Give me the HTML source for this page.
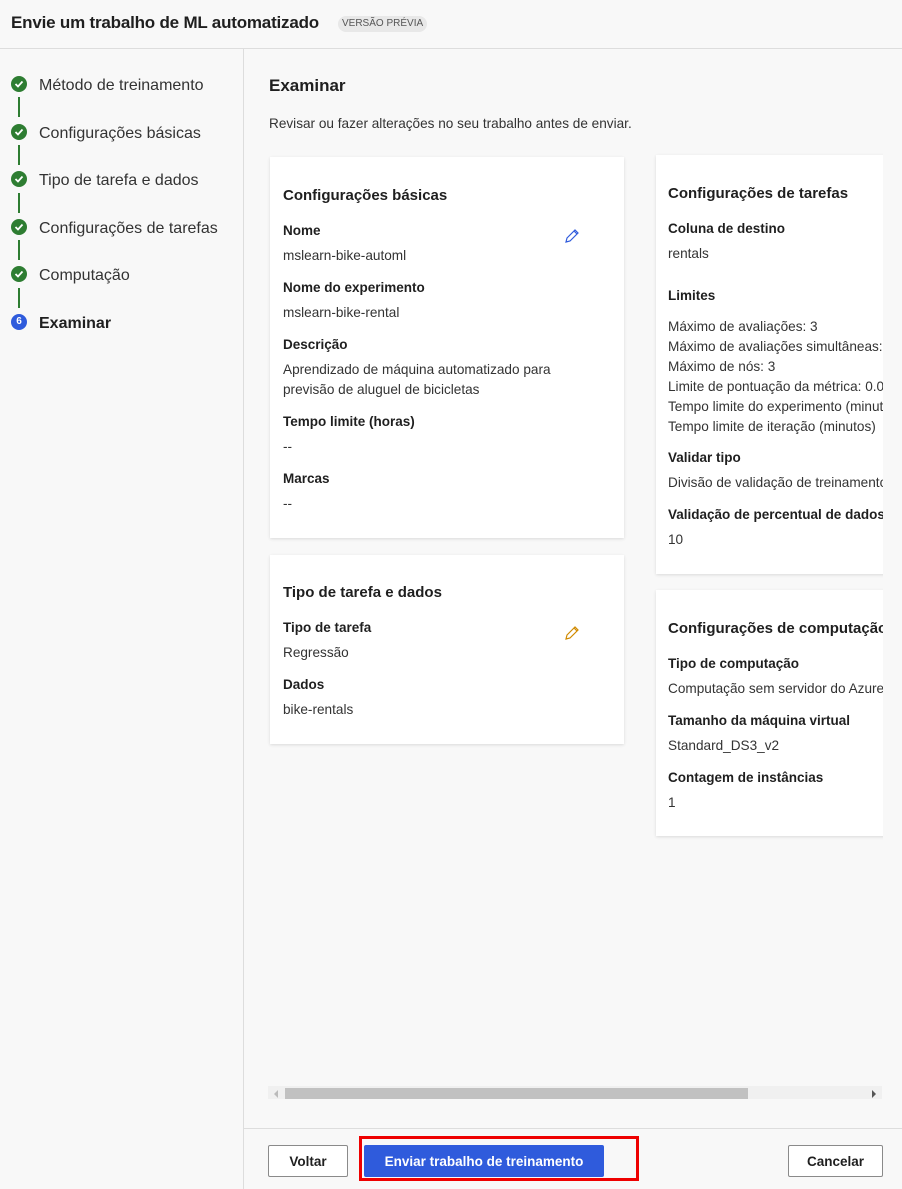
<!DOCTYPE html>
<html><head><meta charset="utf-8"><style>
*{margin:0;padding:0;box-sizing:border-box}
body{width:902px;height:1189px;background:#f8f8f8;font-family:"Segoe UI","Liberation Sans",sans-serif;color:#1f1f1f;position:relative;overflow:hidden}
.a{position:absolute;white-space:nowrap}
.hdr{left:0;top:0;width:902px;height:49px;border-bottom:1px solid #ddd}
.side{left:243px;top:49px;width:1px;height:1140px;background:#ddd}
.step{left:39px;font-size:16px;color:#333}
.chk{left:11px;width:16px;height:16px;border-radius:50%;background:#2e7d32}
.chk svg{position:absolute;left:3px;top:3px}
.ln{left:18px;width:2px;height:20px;background:#2e7d32}
.card{background:#fff;box-shadow:0 1px 3px rgba(0,0,0,.12)}
.t{font-size:15px;font-weight:600}
.l{font-size:13.5px;font-weight:600}
.v{font-size:13.6px;color:#333}
.clip{left:244px;top:49px;width:639px;height:1050px;overflow:hidden}
.btn{height:32px;border:1px solid #8a8a8a;background:#fff;font-size:13.5px;font-weight:600;display:flex;align-items:center;justify-content:center;border-radius:2px}
</style></head><body>
<div class="a hdr"></div>
<div class="a" style="left:11px;top:13px;font-size:17px;font-weight:600;letter-spacing:-0.2px">Envie um trabalho de ML automatizado</div>
<div class="a" style="left:338px;top:16px;height:16px;padding:0 4px;background:#e8e8e8;border-radius:8px;font-size:10px;color:#555;line-height:16px">VERSÃO PRÉVIA</div>
<div class="a side"></div>

<div class="a chk" style="top:76px"><svg width="10" height="10"><path d="M1.5 5l2.5 2.5L8.5 2.5" stroke="#fff" stroke-width="1.8" fill="none"/></svg></div>
<div class="a ln" style="top:97px"></div>
<div class="a chk" style="top:124px"><svg width="10" height="10"><path d="M1.5 5l2.5 2.5L8.5 2.5" stroke="#fff" stroke-width="1.8" fill="none"/></svg></div>
<div class="a ln" style="top:145px"></div>
<div class="a chk" style="top:171px"><svg width="10" height="10"><path d="M1.5 5l2.5 2.5L8.5 2.5" stroke="#fff" stroke-width="1.8" fill="none"/></svg></div>
<div class="a ln" style="top:193px"></div>
<div class="a chk" style="top:219px"><svg width="10" height="10"><path d="M1.5 5l2.5 2.5L8.5 2.5" stroke="#fff" stroke-width="1.8" fill="none"/></svg></div>
<div class="a ln" style="top:240px"></div>
<div class="a chk" style="top:266px"><svg width="10" height="10"><path d="M1.5 5l2.5 2.5L8.5 2.5" stroke="#fff" stroke-width="1.8" fill="none"/></svg></div>
<div class="a ln" style="top:288px"></div>
<div class="a" style="left:11px;top:314px;width:16px;height:16px;border-radius:50%;background:#2f5bdc;color:#fff;font-size:10px;font-weight:700;text-align:center;line-height:16px">6</div>
<div class="a step" style="top:77px">Método de treinamento</div>
<div class="a step" style="top:125px">Configurações básicas</div>
<div class="a step" style="top:172px">Tipo de tarefa e dados</div>
<div class="a step" style="top:220px">Configurações de tarefas</div>
<div class="a step" style="top:267px">Computação</div>
<div class="a step" style="top:315px;font-weight:600;color:#1f1f1f">Examinar</div>

<div class="a clip">
 <div class="a" style="left:25px;top:27px;font-size:17px;font-weight:600">Examinar</div>
 <div class="a v" style="left:25px;top:67px">Revisar ou fazer alterações no seu trabalho antes de enviar.</div>

 <div class="a card" style="left:26px;top:108px;width:354px;height:381px"></div>
 <div class="a t" style="left:39px;top:138px">Configurações básicas</div>
 <svg class="a" style="left:320px;top:179px" width="16" height="16"><path d="M2 14l1-4 8-8 3 3-8 8z M10 3l3 3" stroke="#2f5bdc" stroke-width="1.2" fill="none"/></svg>
 <div class="a l" style="left:39px;top:174px">Nome</div>
 <div class="a v" style="left:39px;top:199px">mslearn-bike-automl</div>
 <div class="a l" style="left:39px;top:231px">Nome do experimento</div>
 <div class="a v" style="left:39px;top:256px">mslearn-bike-rental</div>
 <div class="a l" style="left:39px;top:288px">Descrição</div>
 <div class="a v" style="left:39px;top:313px">Aprendizado de máquina automatizado para</div>
 <div class="a v" style="left:39px;top:333px">previsão de aluguel de bicicletas</div>
 <div class="a l" style="left:39px;top:365px">Tempo limite (horas)</div>
 <div class="a v" style="left:39px;top:390px">--</div>
 <div class="a l" style="left:39px;top:422px">Marcas</div>
 <div class="a v" style="left:39px;top:447px">--</div>

 <div class="a card" style="left:26px;top:506px;width:354px;height:189px"></div>
 <div class="a t" style="left:39px;top:535px">Tipo de tarefa e dados</div>
 <svg class="a" style="left:320px;top:576px" width="16" height="16"><path d="M2 14l1-4 8-8 3 3-8 8z M10 3l3 3" stroke="#d08a00" stroke-width="1.2" fill="none"/></svg>
 <div class="a l" style="left:39px;top:571px">Tipo de tarefa</div>
 <div class="a v" style="left:39px;top:596px">Regressão</div>
 <div class="a l" style="left:39px;top:628px">Dados</div>
 <div class="a v" style="left:39px;top:653px">bike-rentals</div>

 <div class="a card" style="left:412px;top:106px;width:260px;height:419px"></div>
 <div class="a t" style="left:424px;top:136px">Configurações de tarefas</div>
 <div class="a l" style="left:424px;top:172px">Coluna de destino</div>
 <div class="a v" style="left:424px;top:197px">rentals</div>
 <div class="a l" style="left:424px;top:239px">Limites</div>
 <div class="a v" style="left:424px;top:268px;line-height:20px">Máximo de avaliações: 3<br>Máximo de avaliações simultâneas: 3<br>Máximo de nós: 3<br>Limite de pontuação da métrica: 0.0<br>Tempo limite do experimento (minutos)<br>Tempo limite de iteração (minutos)</div>
 <div class="a l" style="left:424px;top:401px">Validar tipo</div>
 <div class="a v" style="left:424px;top:426px">Divisão de validação de treinamento</div>
 <div class="a l" style="left:424px;top:458px">Validação de percentual de dados</div>
 <div class="a v" style="left:424px;top:483px">10</div>

 <div class="a card" style="left:412px;top:541px;width:260px;height:246px"></div>
 <div class="a t" style="left:424px;top:571px">Configurações de computação</div>
 <div class="a l" style="left:424px;top:607px">Tipo de computação</div>
 <div class="a v" style="left:424px;top:632px">Computação sem servidor do Azure</div>
 <div class="a l" style="left:424px;top:664px">Tamanho da máquina virtual</div>
 <div class="a v" style="left:424px;top:689px">Standard_DS3_v2</div>
 <div class="a l" style="left:424px;top:721px">Contagem de instâncias</div>
 <div class="a v" style="left:424px;top:746px">1</div>

 <div class="a" style="left:24px;top:1037px;width:614px;height:17px;background:#f0f0f0"></div>
 <div class="a" style="left:41px;top:1039px;width:463px;height:13px;background:#c1c1c1"></div>
 <div class="a" style="left:30px;top:1041px;width:0;height:0;border:4px solid transparent;border-right-color:#bbb;border-left:0"></div>
 <div class="a" style="left:628px;top:1041px;width:0;height:0;border:4px solid transparent;border-left-color:#555;border-right:0"></div>
</div>

<div class="a" style="left:244px;top:1128px;width:658px;height:1px;background:#ddd"></div>
<div class="a btn" style="left:268px;top:1145px;width:80px">Voltar</div>
<div class="a" style="left:359px;top:1136px;width:280px;height:45px;border:3px solid #e00"></div>
<div class="a btn" style="left:364px;top:1145px;width:240px;background:#2f5bdc;border-color:#2f5bdc;color:#fff">Enviar trabalho de treinamento</div>
<div class="a btn" style="left:788px;top:1145px;width:95px">Cancelar</div>
</body></html>
